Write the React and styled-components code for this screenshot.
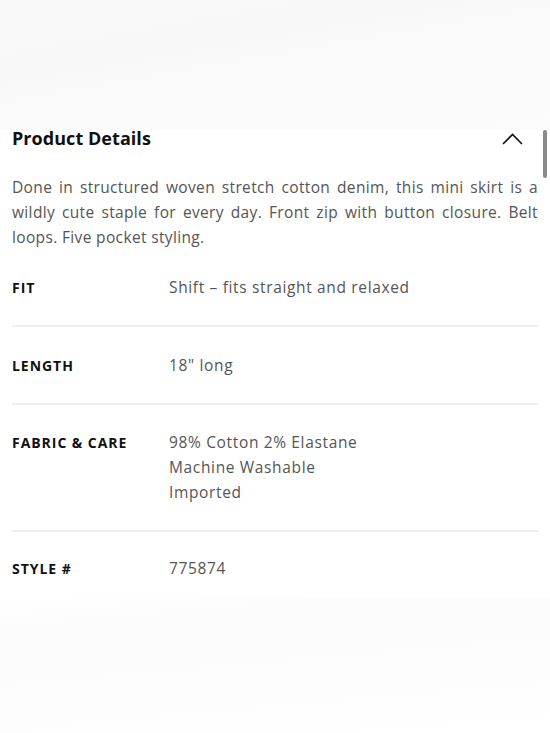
import React from "react";
import styled, { createGlobalStyle } from "styled-components";

const Global = createGlobalStyle`
  html, body {
    margin: 0;
    padding: 0;
    background: #fff;
  }
  body {
    font-family: "Open Sans", "Liberation Sans", sans-serif;
    overflow: hidden;
  }
`;

const Page = styled.div`
  position: relative;
  width: 550px;
  height: 733px;
  overflow: hidden;
  background: #fff;
`;

const ImageFade = styled.div`
  height: ${(p) => p.h}px;
  background: ${(p) => p.bg};
`;

const Details = styled.section`
  padding: 0 12px;
`;

const Header = styled.div`
  display: flex;
  align-items: center;
  justify-content: space-between;
  height: 20px;
  padding: 0 15px 0 0;
  margin-top: -2px;
`;

const Title = styled.h2`
  margin: 0;
  font-size: 18px;
  font-weight: 700;
  color: #111;
  letter-spacing: 0.05px;
`;

const Chevron = styled.button`
  border: 0;
  background: none;
  padding: 0;
  display: flex;
  cursor: pointer;
`;

const Description = styled.p`
  margin: 27px 0 0;
  font-size: 15.5px;
  line-height: 25px;
  color: #555;
  text-align: justify;
  letter-spacing: 0.35px;
`;

const Specs = styled.dl`
  margin: 0;
`;

const Row = styled.div`
  display: grid;
  grid-template-columns: 157px 1fr;
  padding: ${(p) => (p.first ? "25px" : p.last ? "24px" : "25.5px")} 0 ${(p) => (p.last ? "0" : "25px")};
  border-bottom: ${(p) => (p.last ? "none" : "2px solid #eeeeee")};
`;

const Label = styled.dt`
  margin: 0;
  font-size: 14px;
  line-height: 25px;
  font-weight: 700;
  color: #111;
  letter-spacing: 0.95px;
`;

const Value = styled.dd`
  margin: 0;
  font-size: 15.5px;
  line-height: 25px;
  color: #555;
  letter-spacing: 0.65px;
`;

const Scrollbar = styled.div`
  position: absolute;
  right: 3px;
  top: 130px;
  width: 4px;
  height: 48px;
  border-radius: 2px;
  background: #8a8a8a;
`;

const specs = [
  { label: "FIT", value: ["Shift – fits straight and relaxed"] },
  { label: "LENGTH", value: ["18\" long"] },
  { label: "FABRIC & CARE", value: ["98% Cotton 2% Elastane", "Machine Washable", "Imported"] },
  { label: "STYLE #", value: ["775874"] },
];

export default function App() {
  return (
    <Page>
      <Global />
      <ImageFade
        h={130}
        bg="linear-gradient(170deg, #f9f9f9 0%, #f8f8f8 35%, #fbfbfb 60%, #fcfcfc 100%)"
      />
      <Details>
        <Header>
          <Title>Product Details</Title>
          <Chevron aria-label="Collapse">
            <svg width="21" height="13" viewBox="0 0 21 13" fill="none">
              <path d="M1 12L10.5 2.5L20 12" stroke="#111" strokeWidth="1.6" />
            </svg>
          </Chevron>
        </Header>
        <Description>
          Done in structured woven stretch cotton denim, this mini skirt is a wildly cute staple for
          every day. Front zip with button closure. Belt loops. Five pocket styling.
        </Description>
        <Specs>
          {specs.map((s, i) => (
            <Row key={s.label} first={i === 0} last={i === specs.length - 1}>
              <Label>{s.label}</Label>
              <Value>
                {s.value.map((v) => (
                  <div key={v}>{v}</div>
                ))}
              </Value>
            </Row>
          ))}
        </Specs>
      </Details>
      <ImageFade
        h={140}
        bg="linear-gradient(175deg, #ffffff 0%, #fcfcfc 20%, #fdfdfd 60%, #ffffff 100%)"
        style={{ marginTop: 16 }}
      />
      <Scrollbar />
    </Page>
  );
}
